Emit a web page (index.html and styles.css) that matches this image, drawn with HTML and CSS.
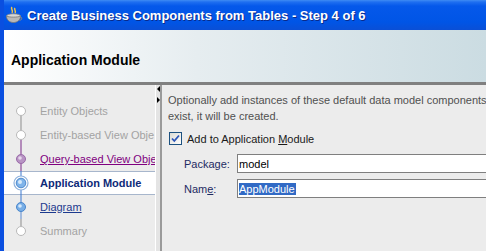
FILE: index.html
```html
<!DOCTYPE html>
<html>
	<head>
		<meta charset="UTF-8">
		<title>Create Business Components from Tables</title>
		<link rel="stylesheet" href="styles.css">
	</head>
	<body>
		<div class="window">
			<div class="titlebar">
				<svg class="app-icon" width="18" height="18" viewBox="0 0 18 18">
					<path d="M7 1c-2 2 2 3 0 6M10 2c-1.5 1.5 1.5 2.5 0 5" stroke="#f2c64a" stroke-width="1.5" fill="none"/>
					<ellipse cx="8.5" cy="10" rx="7" ry="2.2" fill="#d8d8d8" stroke="#8a8a8a" stroke-width="0.8"/>
					<path d="M1.5 10c0 4 3 6.5 7 6.5s7-2.5 7-6.5c-2 1.5-12 1.5-14 0z" fill="#b8b8b8" stroke="#777" stroke-width="0.8"/>
					<path d="M15.3 11c2 0 2 3-0.8 3.5" stroke="#888" stroke-width="1" fill="none"/>
				</svg>
				<span class="title-text">Create Business Components from Tables - Step 4 of 6</span>
			</div>
			<div class="header">Application Module</div>
			<div class="main">
				<div class="nav">
					<div class="step disabled">
						<svg class="node" width="32" height="24" viewBox="0 0 32 24">
							<line x1="17" y1="12" x2="17" y2="24" stroke="#8d8d8d"/>
							<circle cx="17" cy="12" r="4.5" fill="#fff" stroke="#b9b9b9"/>
						</svg>
						<span>Entity Objects</span>
					</div>
					<div class="step disabled">
						<svg class="node" width="32" height="24" viewBox="0 0 32 24">
							<line x1="17" y1="0" x2="17" y2="12" stroke="#8d8d8d"/>
							<line x1="17" y1="12" x2="17" y2="24" stroke="#7b2a88"/>
							<circle cx="17" cy="12" r="4.5" fill="#fff" stroke="#b9b9b9"/>
						</svg>
						<span>Entity-based View Obje</span>
					</div>
					<div class="step visited">
						<svg class="node" width="32" height="24" viewBox="0 0 32 24">
							<line x1="17" y1="0" x2="17" y2="24" stroke="#7b2a88"/>
							<circle cx="17" cy="12" r="4.5" fill="#b894c4" stroke="#9a6aa8"/>
							<circle cx="16" cy="11" r="1.8" fill="#e6d6ec"/>
						</svg>
						<a>Query-based View Obje</a>
					</div>
					<div class="step current">
						<svg class="node" width="32" height="24" viewBox="0 0 32 24">
							<line x1="17" y1="0" x2="17" y2="24" stroke="#3a78d0"/>
							<circle cx="17" cy="12" r="7" fill="#fff" stroke="#8fb2dc" stroke-width="1.2"/>
							<circle cx="17" cy="12" r="4.8" fill="#7fb4ea" stroke="#4d88cc"/>
							<circle cx="16" cy="11" r="2" fill="#d6e9fb"/>
						</svg>
						<span>Application Module</span>
					</div>
					<div class="step next">
						<svg class="node" width="32" height="24" viewBox="0 0 32 24">
							<line x1="17" y1="0" x2="17" y2="12" stroke="#3a78d0"/>
							<line x1="17" y1="12" x2="17" y2="24" stroke="#5a8ad0"/>
							<circle cx="17" cy="12" r="4.5" fill="#78aee6" stroke="#4a86cc"/>
							<circle cx="16" cy="11" r="1.8" fill="#d6e9fb"/>
						</svg>
						<a>Diagram</a>
					</div>
					<div class="step disabled">
						<svg class="node" width="32" height="24" viewBox="0 0 32 24">
							<line x1="17" y1="0" x2="17" y2="12" stroke="#8d8d8d"/>
							<circle cx="17" cy="12" r="4.5" fill="#fff" stroke="#b9b9b9"/>
						</svg>
						<span>Summary</span>
					</div>
				</div>
				<div class="splitter">
					<span class="arrow up"></span>
					<span class="arrow down"></span>
				</div>
				<div class="content">
					<p class="intro">Optionally add instances of these default data model components<br>exist, it will be created.</p>
					<label class="check-row">
						<span class="checkbox">
							<svg width="9" height="9" viewBox="0 0 9 9"><path d="M1 4.5l2.3 2.5 4.7-5.5" stroke="#2c55b8" stroke-width="1.8" fill="none"/></svg>
						</span>
						<span>Add to Application <u>M</u>odule</span>
					</label>
					<div class="field">
						<span class="field-label">Packa<u>g</u>e:</span>
						<span class="input">model</span>
					</div>
					<div class="field">
						<span class="field-label">Nam<u>e</u>:</span>
						<span class="input"><span class="selected">AppModule</span></span>
					</div>
				</div>
			</div>
		</div>
	</body>
</html>
```

FILE: styles.css
```css
body {
	margin: 0;
	font-family: "Liberation Sans", Arial, sans-serif;
	font-size: 11px;
}

.window {
	width: 486px;
	height: 251px;
	overflow: hidden;
	box-sizing: border-box;
	border-left: 4px solid #0a4fe0;
	background: #ececec;
	display: flex;
	flex-direction: column;
}

.titlebar {
	height: 30px;
	margin-left: -4px;
	padding-left: 5px;
	display: flex;
	align-items: center;
	background: linear-gradient(#3f8cf3 0px, #1f6ff0 2px, #0558ea 6px, #0055e6 22px, #0a4fd6 30px);
	color: #fff;
	flex-shrink: 0;
}

.app-icon {
	margin-right: 4px;
}

.title-text {
	font-family: "Liberation Sans", sans-serif;
	font-weight: bold;
	font-size: 13px;
	text-shadow: 1px 1px 0 #0a2a8a;
	white-space: nowrap;
}

.header {
	height: 55px;
	flex-shrink: 0;
	box-sizing: border-box;
	padding: 22px 0 0 7px;
	background: linear-gradient(to right, #ffffff 0%, #e6edf0 40%, #cbdce2 100%);
	border-bottom: 3px solid #808080;
	font-size: 14px;
	font-weight: bold;
	color: #000;
}

.main {
	flex: 1;
	display: flex;
}

.nav {
	width: 151px;
	flex-shrink: 0;
	padding-top: 14px;
	overflow: hidden;
	white-space: nowrap;
}

.step {
	height: 24px;
	display: flex;
	align-items: center;
	box-sizing: border-box;
}

.node {
	flex-shrink: 0;
	margin-right: 4px;
}

.step.disabled {
	color: #a3a3a3;
}

.step.visited a {
	color: #800080;
	text-decoration: underline;
}

.step.current {
	background: #fff;
	border-top: 1px solid #a7b6cc;
	border-bottom: 1px solid #a7b6cc;
	color: #0d2a78;
	font-weight: bold;
}

.step.next a {
	color: #1c3a8e;
	text-decoration: underline;
}

.splitter {
	width: 4px;
	flex-shrink: 0;
	border-left: 1px solid #fff;
	border-right: 2px solid #9a9a9a;
	background: #e4e4e4;
	display: flex;
	flex-direction: column;
	align-items: center;
	padding-top: 1px;
	gap: 5px;
}

.arrow {
	width: 0;
	height: 0;
	border-top: 3px solid transparent;
	border-bottom: 3px solid transparent;
}

.arrow.up {
	border-right: 3px solid #000;
}

.arrow.down {
	border-left: 3px solid #000;
}

.content {
	flex: 1;
	padding: 7px 0 0 6px;
	white-space: nowrap;
	overflow: hidden;
}

.intro {
	margin: 0;
	line-height: 16px;
	color: #505050;
}

.check-row {
	display: flex;
	align-items: center;
	margin-top: 8px;
	margin-left: 1px;
	color: #1a1a1a;
}

.checkbox {
	width: 11px;
	height: 11px;
	border: 1px solid #1c5180;
	background: linear-gradient(135deg, #dcdcd6, #fdfdfd);
	display: flex;
	align-items: center;
	justify-content: center;
	margin-right: 5px;
}

.field {
	display: flex;
	align-items: center;
	margin-top: 9px;
}

.field + .field {
	margin-top: 6px;
}

.field-label {
	width: 53px;
	flex-shrink: 0;
	padding-left: 16px;
	color: #1e2b63;
}

.input {
	width: 300px;
	height: 17px;
	flex-shrink: 0;
	border: 1px solid #7f7f7f;
	background: #fff;
	display: flex;
	align-items: center;
	padding-left: 1px;
	color: #000;
}

.selected {
	background: #316ac5;
	color: #fff;
	padding-right: 1px;
}
```
